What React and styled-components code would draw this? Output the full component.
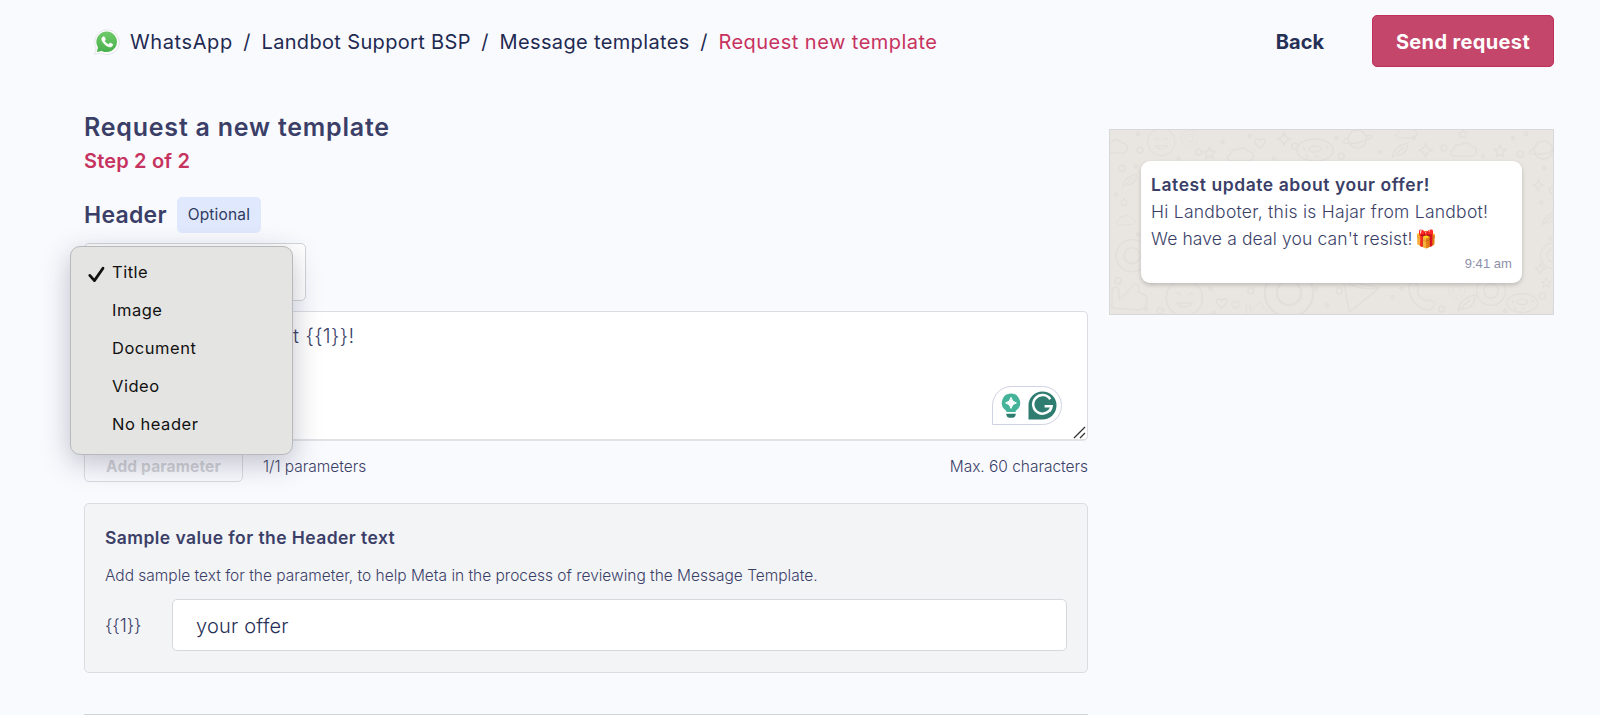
import { useState } from "react";
import styled, { createGlobalStyle } from "styled-components";

const headerTypes = ["Title", "Image", "Document", "Video", "No header"]

const crumbs = [
    {label: "WhatsApp", spacing: "0.6px"},
    {label: "Landbot Support BSP", spacing: "0.34px"},
    {label: "Message templates", spacing: "0.36px"},
    {label: "Request new template", spacing: "0.47px", current: true},
]

function WhatsAppIcon(){
    return (
        <svg width="28" height="28" viewBox="0 0 28 28">
            <defs>
                <linearGradient id="waGreen" x1="0" y1="0" x2="0" y2="1">
                    <stop offset="0" stopColor="#6fca69" />
                    <stop offset="1" stopColor="#48b04c" />
                </linearGradient>
            </defs>
            <path d="M1.6 26.4 L3.2 20 A12.3 12.3 0 1 1 8 24.9 Z" fill="#fdfdfd" stroke="#e4e5e8" strokeWidth="1" />
            <path d="M3.9 24 L5 19.4 A10.3 10.3 0 1 1 8.8 22.9 Z" fill="url(#waGreen)" />
            <path transform="translate(3.3 2.9) scale(.91)" fill="#fff" stroke="#fff" strokeWidth=".7" d="M17.472 14.382c-.297-.149-1.758-.867-2.03-.967-.273-.099-.471-.148-.67.15-.197.297-.767.966-.94 1.164-.173.199-.347.223-.644.075-.297-.15-1.255-.463-2.39-1.475-.883-.788-1.48-1.761-1.653-2.059-.173-.297-.018-.458.13-.606.134-.133.298-.347.446-.52.149-.174.198-.298.298-.497.099-.198.05-.371-.025-.52-.075-.149-.669-1.612-.916-2.207-.242-.579-.487-.5-.669-.51-.173-.008-.371-.01-.57-.01-.198 0-.52.074-.792.372-.272.297-1.04 1.016-1.04 2.479 0 1.462 1.065 2.875 1.213 3.074.149.198 2.096 3.2 5.077 4.487.709.306 1.262.489 1.694.625.712.227 1.36.195 1.871.118.571-.085 1.758-.719 2.006-1.413.248-.694.248-1.289.173-1.413-.074-.124-.272-.198-.57-.347" />
        </svg>
    )
}

function BulbIcon(){
    return (
        <svg width="20" height="26" viewBox="0 0 20 26">
            <path d="M10 .6 A9.2 9.2 0 0 1 15.4 17.2 Q14.6 18 14.4 19 H5.6 Q5.4 18 4.6 17.2 A9.2 9.2 0 0 1 10 .6 Z" fill="#45b39a" />
            <path d="M10 4.4 Q10.9 9 15.4 9.9 Q10.9 10.8 10 15.4 Q9.1 10.8 4.6 9.9 Q9.1 9 10 4.4 Z" fill="#fff" stroke="#fff" strokeWidth="1" strokeLinejoin="round" />
            <path d="M5.3 20.8 H14.7 V21.6 Q14 24.8 11.6 24.8 H8.4 Q6 24.8 5.3 21.6 Z" fill="#2f7d70" />
        </svg>
    )
}

function GrammarIcon(){
    return (
        <svg width="29" height="29" viewBox="0 0 29 29">
            <path d="M14.5 .5 A14 14 0 0 1 14.5 28.5 H.5 V14.5 A14 14 0 0 1 14.5 .5 Z" fill="#2f7d70" />
            <path d="M22.3 8.2 A9.3 9.3 0 1 0 23.6 15.3 H16.6 M23.6 15.3 Q23.3 18 21.4 20.4" fill="none" stroke="#fff" strokeWidth="2.5" />
        </svg>
    )
}

function ResizeHandle(){
    return (
        <Handle width="13" height="13" viewBox="0 0 13 13">
            <path d="M1 12 L12 1 M7 12 L12 7" stroke="#333" strokeWidth="1.3" />
        </Handle>
    )
}

const star = "M0 -6 L1.8 -2 L6 -1.6 L2.8 1.2 L3.8 5.4 L0 3.2 L-3.8 5.4 L-2.8 1.2 L-6 -1.6 L-1.8 -2 Z"
const sparkle = "M0 -7 Q1 -1 7 0 Q1 1 0 7 Q-1 1 -7 0 Q-1 -1 0 -7 Z"
const cloud = "M-11 6 Q-16 2 -10 -1 Q-9 -7 -3 -5 Q2 -10 7 -4 Q14 -3 12 3 Q11 6 7 6 Z"
const heart = "M0 5 Q-8 -1 -4 -4 Q-1 -5 0 -2 Q1 -5 4 -4 Q8 -1 0 5 Z"
const planet = "M-9 0 A9 9 0 0 1 9 0 A9 9 0 0 1 -9 0 M-9 -2 Q-17 3 -12 4 Q0 6 13 -1 Q17 -5 9 -3"
const donut = "M-18 0 A18 11 0 0 1 18 0 A18 11 0 0 1 -18 0 M-6 -1 A6 3 0 0 1 6 -1 A6 3 0 0 1 -6 -1 M-12 -3 L-10 0 M11 -4 L13 -1 M0 6 L3 7 M-9 5 L-7 7"
const face = "M-18 0 A18 18 0 0 1 18 0 A18 18 0 0 1 -18 0 M-7 -5 L-4 -3 M7 -5 L4 -3 M-8 5 Q0 13 8 5 Z"
const leaf = "M-9 8 Q-8 -4 8 -8 Q8 5 -4 6 M-9 8 L3 -3"
const cone = "M-16 -16 L20 -8 L-10 16 Z M-16 -16 Q0 -4 20 -8"
const phone = "M-14 -10 Q-8 -18 -4 -8 Q-8 -2 2 5 Q10 2 12 8 Q8 17 -2 12 Q-14 4 -14 -10 Z"
const hand = "M-16 12 V-6 Q-12 -12 -9 -6 V4 Q0 -4 6 -12 Q12 -12 10 -4 L18 0 Q22 12 10 14 Z"
const camera = "M-16 0 A16 16 0 0 1 16 0 A16 16 0 0 1 -16 0 M-8 0 A8 8 0 0 1 8 0 A8 8 0 0 1 -8 0"

const doodles = [
    [cloud, 5, 17], [face, 51, 12, 0.75], [camera, 79, 8, 0.5], [star, 99, 23], [cloud, 130, 25], [heart, 149, 13], [sparkle, 173, 9],
    [donut, 204, 20], [planet, 246, 9], [leaf, 289, 20, 0.9], [sparkle, 314, 20], [cloud, 352, 20], [star, 388, 21], [star, 351, 4, 0.8],
    [planet, 431, 20], [cloud, 295, 3, 0.8], [leaf, 20, 50, 0.8], [star, 14, 72, 0.7], [cloud, 16, 90, 0.7], [camera, 22, 125],
    [hand, 18, 165], [face, 74, 167], [heart, 111, 172], [heart, 125, 174, 0.8], [camera, 178, 162, 1.5],
    [cone, 248, 165], [phone, 311, 165], [camera, 345, 160, 0.5], [leaf, 355, 172], [camera, 379, 160, 0.9], [donut, 410, 172, 0.85],
    [sparkle, 426, 55, 0.8], [leaf, 437, 88, 0.8], [camera, 441, 125, 0.8], [sparkle, 428, 138, 0.8], [star, 434, 152, 0.8], [hand, 145, 178, 0.6],
]

const dots = [[30, 20], [28, 4], [68, 28], [88, 22], [112, 12], [139, 6], [184, 16], [163, 28], [225, 8], [230, 26], [268, 22], [302, 8], [332, 18], [371, 26],
    [401, 8], [408, 24], [414, 4], [26, 36], [12, 38], [6, 64], [28, 104], [8, 150], [42, 152], [36, 178], [50, 180], [100, 158], [103, 182], [140, 160],
    [205, 158], [216, 174], [228, 160], [281, 166], [290, 158], [330, 178], [393, 180], [432, 38], [440, 60], [429, 72], [438, 108], [430, 165], [442, 180]]

function Wallpaper(){
    return (
        <Doodles viewBox="0 0 443 183" preserveAspectRatio="xMinYMin slice">
            <g fill="none" stroke="#e2deda" strokeWidth="1.4" strokeLinejoin="round" strokeLinecap="round">
                {doodles.map(([d, x, y, s = 1], i) => <path key={i} d={d} transform={`translate(${x} ${y}) scale(${s})`} />)}
                {dots.map(([x, y], i) => <circle key={i} cx={x} cy={y} r={i % 3 === 0 ? 3 : 1.5} />)}
            </g>
        </Doodles>
    )
}

function TypeMenu({selected, onSelect}){
    return (
        <Menu>
            {headerTypes.map((type) => (
                <MenuItem key={type} onClick={() => onSelect(type)}>
                    <CheckSlot>
                        {type === selected && (
                            <svg width="18" height="18" viewBox="0 0 18 18">
                                <path d="M2.8 10.4 L7.4 15.6 L16 3.2" fill="none" stroke="#111" strokeWidth="2.8" strokeLinecap="round" strokeLinejoin="round" />
                            </svg>
                        )}
                    </CheckSlot>
                    {type}
                </MenuItem>
            ))}
        </Menu>
    )
}

function App(){

    const [headerType, setHeaderType] = useState("Title")
    const [sample, setSample] = useState("your offer")

    return (
        <>
            <GlobalStyle />
            <Page>
                <TopBar>
                    <Breadcrumb>
                        <WhatsAppIcon />
                        {crumbs.map((crumb, i) => (
                            <Crumb key={crumb.label} $current={crumb.current} $spacing={crumb.spacing}>
                                {i > 0 && <Slash>/</Slash>}
                                {crumb.label}
                            </Crumb>
                        ))}
                    </Breadcrumb>
                    <Actions>
                        <BackButton>Back</BackButton>
                        <SendButton>Send request</SendButton>
                    </Actions>
                </TopBar>

                <Content>
                    <FormColumn>
                        <Title>Request a new template</Title>
                        <Step>Step 2 of 2</Step>

                        <SectionHead>
                            <SectionTitle>Header</SectionTitle>
                            <Badge>Optional</Badge>
                        </SectionHead>

                        <SelectWrap>
                            <SelectBox />
                            <TypeMenu selected={headerType} onSelect={setHeaderType} />
                        </SelectWrap>

                        <TextBox>
                            t {"{{1}}"}!
                            <Assistant>
                                <BulbIcon />
                                <GrammarIcon />
                            </Assistant>
                            <ResizeHandle />
                        </TextBox>

                        <TextFooter>
                            <AddButton disabled>Add parameter</AddButton>
                            <Hint>1/1 parameters</Hint>
                            <Limit>Max. 60 characters</Limit>
                        </TextFooter>

                        <SampleCard>
                            <SampleTitle>Sample value for the Header text</SampleTitle>
                            <SampleText>Add sample text for the parameter, to help Meta in the process of reviewing the Message Template.</SampleText>
                            <SampleRow>
                                <Param>{"{{1}}"}</Param>
                                <SampleInput value={sample} onChange={(e) => setSample(e.target.value)} />
                            </SampleRow>
                        </SampleCard>

                        <Divider />
                    </FormColumn>

                    <Preview>
                        <Wallpaper />
                        <Bubble>
                            <BubbleTitle>Latest update about {sample}!</BubbleTitle>
                            <BubbleLine $spacing="0.26px">Hi Landboter, this is Hajar from Landbot!</BubbleLine>
                            <BubbleLine $spacing="0.12px">We have a deal you can't resist!<Gift>🎁</Gift></BubbleLine>
                            <Time>9:41 am</Time>
                        </Bubble>
                    </Preview>
                </Content>
            </Page>
        </>
    )
}

export default App

const GlobalStyle = createGlobalStyle`
*{
    box-sizing: border-box;
}
body{
    margin: 0;
    background-color: #f9fafe;
    font-family: Inter, "Liberation Sans", sans-serif;
    color: #3b3f68;
    overflow: hidden;
}
h1, h2, h3, p{
    margin: 0;
}
button, input{
    font-family: inherit;
}
`

const Page = styled.div`
width: 1600px;
height: 715px;
overflow: hidden;
`

const TopBar = styled.header`
display: flex;
justify-content: space-between;
align-items: center;
height: 52px;
margin-top: 15px;
padding: 0 46px 0 93px;
`

const Breadcrumb = styled.nav`
display: flex;
align-items: center;
padding-top: 1px;
font-size: 20px;

svg{
    margin-right: 9px;
}
`

const Crumb = styled.span`
letter-spacing: ${(props) => props.$spacing};
color: ${(props) => props.$current ? "#c7335f" : "#1f2a52"};
white-space: nowrap;
`

const Slash = styled.span`
margin: 0 11px 0 10.5px;
letter-spacing: 0;
color: #1f2a52;
`

const Actions = styled.div`
display: flex;
align-items: center;
gap: 48px;
`

const BackButton = styled.button`
padding: 1px 0 0;
border: none;
background: none;
color: #263056;
font-size: 20px;
font-weight: 700;
letter-spacing: 0;
`

const SendButton = styled.button`
width: 182px;
height: 52px;
padding: 1px 0 0;
border: 1px solid #c0305c;
border-radius: 5px;
background-color: #c4466a;
color: #fff;
font-size: 20px;
font-weight: 700;
letter-spacing: 0.36px;
`

const Content = styled.main`
display: flex;
align-items: flex-start;
gap: 21px;
padding: 44px 0 0 84px;
`

const FormColumn = styled.section`
width: 1004px;
`

const Title = styled.h1`
font-size: 25px;
font-weight: 600;
line-height: 32px;
letter-spacing: 0.78px;
`

const Step = styled.p`
margin-top: 5px;
color: #c7335f;
font-size: 20px;
font-weight: 600;
line-height: 26px;
letter-spacing: 0.18px;
`

const SectionHead = styled.div`
display: flex;
align-items: center;
gap: 10px;
margin-top: 23px;
`

const SectionTitle = styled.h2`
font-size: 23px;
font-weight: 600;
letter-spacing: 0.27px;
`

const Badge = styled.span`
width: 84px;
height: 36px;
border-radius: 5px;
background-color: #dfe8fd;
color: #303a60;
font-size: 15.5px;
line-height: 36px;
letter-spacing: 0.17px;
text-align: center;
`

const SelectWrap = styled.div`
position: relative;
margin-top: 10px;
`

const SelectBox = styled.div`
width: 222px;
height: 58px;
border: 1px solid #d3d4da;
border-radius: 5px;
background-color: #fff;
`

const Menu = styled.ul`
position: absolute;
z-index: 2;
top: 3px;
left: -14px;
width: 223px;
height: 209px;
margin: 0;
padding: 6px 0 0;
border: 1px solid #b9b9bc;
border-radius: 10px;
background-color: #e4e4e2;
box-shadow: 0 8px 28px rgba(40, 44, 70, 0.28);
list-style: none;
`

const MenuItem = styled.li`
display: flex;
align-items: center;
height: 38px;
padding-left: 16px;
color: #111;
font-size: 16.5px;
letter-spacing: 0.52px;
cursor: default;
`

const CheckSlot = styled.span`
width: 25px;
height: 18px;
margin-top: 4px;
`

const TextBox = styled.div`
position: relative;
height: 130px;
margin-top: 10px;
padding: 10px 24px 10px 208px;
border: 1px solid #dcdde2;
border-bottom: 2px solid #e1e2e6;
border-radius: 5px;
background-color: #fff;
font-size: 20px;
font-weight: 300;
line-height: 28px;
letter-spacing: 0.4px;
`

const Assistant = styled.div`
position: absolute;
right: 25px;
bottom: 14px;
display: flex;
align-items: center;
justify-content: space-between;
width: 70px;
height: 39px;
padding: 0 4px 0 8px;
border: 1px solid #cfd2e2;
border-radius: 20px 20px 20px 0;
background-color: #fff;
`

const Handle = styled.svg`
position: absolute;
right: 1px;
bottom: 0;
`

const TextFooter = styled.div`
display: flex;
align-items: center;
margin-top: 9px;
height: 32px;
font-size: 15.5px;
`

const AddButton = styled.button`
width: 159px;
height: 32px;
padding: 0;
border: 1px solid #d9dae0;
border-radius: 5px;
background-color: transparent;
color: #d0d1d6;
font-size: 15.5px;
font-weight: 700;
letter-spacing: 0.16px;
`

const Hint = styled.span`
margin-left: 20px;
font-weight: 300;
letter-spacing: -0.03px;
`

const Limit = styled.span`
margin-left: auto;
font-weight: 300;
letter-spacing: -0.03px;
`

const SampleCard = styled.div`
height: 170px;
margin-top: 21px;
padding: 22px 20px 0;
border: 1px solid #dcdde1;
border-radius: 5px;
background-color: #f3f4f6;
`

const SampleTitle = styled.h3`
font-size: 17.5px;
font-weight: 600;
line-height: 24px;
letter-spacing: 0.43px;
`

const SampleText = styled.p`
margin-top: 14px;
font-size: 15.5px;
font-weight: 300;
line-height: 24px;
letter-spacing: -0.01px;
`

const SampleRow = styled.div`
display: flex;
align-items: center;
margin-top: 11px;
`

const Param = styled.span`
width: 67px;
font-size: 18px;
font-weight: 300;
letter-spacing: -0.14px;
`

const SampleInput = styled.input`
flex: 1;
height: 52px;
padding: 2px 23px 0;
border: 1px solid #d6d8dd;
border-radius: 5px;
background-color: #fff;
color: #263056;
font-size: 20px;
font-weight: 300;
letter-spacing: 0.22px;
outline: none;
`

const Divider = styled.div`
height: 1px;
margin-top: 41px;
background-color: #d3d4d8;
`

const Preview = styled.aside`
position: relative;
width: 445px;
height: 186px;
margin-top: 18px;
padding: 31px 31px 0;
border: 1px solid #d6d8dc;
background-color: #e9e5e0;
`

const Doodles = styled.svg`
position: absolute;
inset: 0;
width: 100%;
height: 100%;
`

const Bubble = styled.div`
position: relative;
display: flex;
flex-direction: column;
height: 122px;
padding: 10px 10px 0;
border-radius: 9px;
background-color: #fff;
box-shadow: 0 2px 4px rgba(0, 0, 0, 0.18);
font-size: 17.5px;
line-height: 27px;
white-space: nowrap;
`

const BubbleTitle = styled.h3`
font-size: 17.5px;
font-weight: 600;
letter-spacing: 0.56px;
`

const BubbleLine = styled.p`
height: 27px;
font-weight: 300;
letter-spacing: ${(props) => props.$spacing};
`

const Gift = styled.span`
margin-left: 3px;
font-size: 17.5px;
font-family: "Noto Color Emoji", sans-serif;
`

const Time = styled.span`
align-self: flex-end;
margin-top: 4px;
color: #8d90aa;
font-family: "Liberation Sans", Arial, sans-serif;
font-size: 13px;
line-height: 16px;
letter-spacing: 0.05px;
`
